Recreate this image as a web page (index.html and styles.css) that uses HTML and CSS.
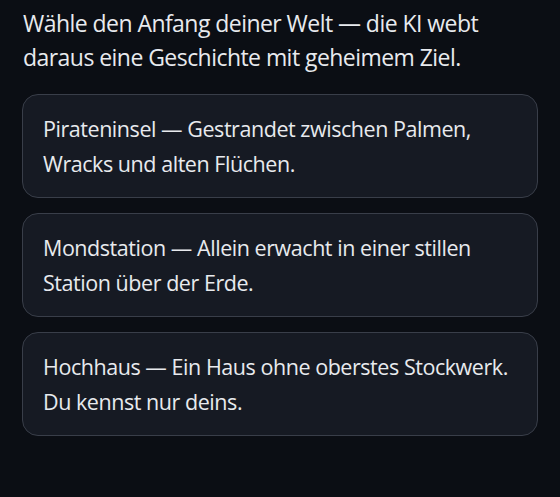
FILE: index.html
```html
<!DOCTYPE html>
<html lang="de">
<head>
<meta charset="utf-8">
<link rel="stylesheet" href="styles.css">
</head>
<body>
<main class="page">
  <p class="intro">Wähle den Anfang deiner Welt — die KI webt daraus eine Geschichte mit geheimem Ziel.</p>
  <div class="choices">
    <button class="choice">Pirateninsel — Gestrandet zwischen Palmen, Wracks und alten Flüchen.</button>
    <button class="choice">Mondstation — Allein erwacht in einer stillen Station über der Erde.</button>
    <button class="choice">Hochhaus — Ein Haus ohne oberstes Stockwerk. Du kennst nur deins.</button>
  </div>
</main>
</body>
</html>
```
FILE: styles.css
```css
html, body {
  margin: 0;
  padding: 0;
  background: #0b0e14;
  height: 100%;
}
.page {
  padding: 6px 22px 0 22px;
  font-family: "Open Sans", "Noto Sans", sans-serif;
  color: #e8eaee;
}
.intro {
  margin: 0;
  font-size: 23px;
  letter-spacing: -0.55px;
  line-height: 34px;
  padding-left: 1px;
}
.choices {
  margin-top: 20px;
  display: flex;
  flex-direction: column;
  gap: 15px;
}
.choice {
  display: block;
  width: 100%;
  text-align: left;
  font-family: inherit;
  font-size: 21.5px;
  letter-spacing: -0.45px;
  line-height: 35px;
  color: #e8eaee;
  background: #161a23;
  border: 1px solid #393e49;
  border-radius: 16px;
  padding: 16px 19px 16px 20px;
  margin: 0;
}
```
